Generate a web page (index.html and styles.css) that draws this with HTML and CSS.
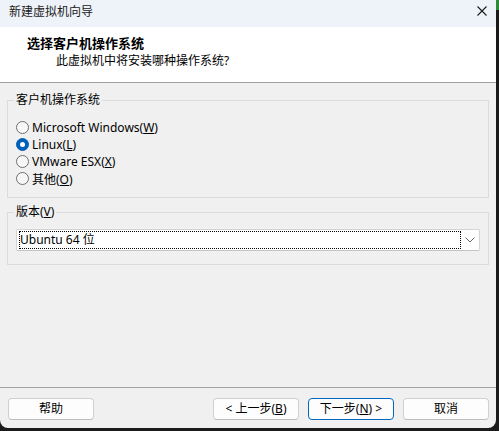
FILE: index.html
```html
<!DOCTYPE html>
<html lang="zh-CN">
<head>
<meta charset="utf-8">
<title>新建虚拟机向导</title>
<link rel="stylesheet" href="styles.css">
</head>
<body>
<div class="window">
  <div class="titlebar">
    <span class="title">新建虚拟机向导</span>
    <svg class="close" width="10" height="10" viewBox="0 0 10 10"><path d="M0.5 0.5 L9.5 9.5 M9.5 0.5 L0.5 9.5" stroke="#1a1a1a" stroke-width="1.1" fill="none"/></svg>
  </div>
  <div class="header">
    <div class="h-title">选择客户机操作系统</div>
    <div class="h-sub">此虚拟机中将安装哪种操作系统?</div>
  </div>
  <div class="content">
    <fieldset class="group group-os">
      <legend>客户机操作系统</legend>
      <div class="radio-list">
        <div class="radio"><span class="dot"></span><span>Microsoft Windows(<u>W</u>)</span></div>
        <div class="radio"><span class="dot checked"></span><span>Linux(<u>L</u>)</span></div>
        <div class="radio"><span class="dot"></span><span>VMware ESX(<u>X</u>)</span></div>
        <div class="radio"><span class="dot"></span><span>其他(<u>O</u>)</span></div>
      </div>
    </fieldset>
    <fieldset class="group group-ver">
      <legend>版本(<u>V</u>)</legend>
      <div class="combo">
        <div class="combo-field">Ubuntu 64 位</div>
        <div class="combo-arrow"><svg width="10" height="6" viewBox="0 0 10 6"><path d="M0.5 0.5 L5 5 L9.5 0.5" stroke="#6a6a6a" stroke-width="1" fill="none"/></svg></div>
      </div>
    </fieldset>
  </div>
  <div class="footer">
    <button class="btn">帮助</button>
    <span class="spacer"></span>
    <button class="btn">&lt; 上一步(<u>B</u>)</button>
    <button class="btn primary">下一步(<u>N</u>) &gt;</button>
    <button class="btn">取消</button>
  </div>
</div>
</body>
</html>
```

FILE: styles.css
```css
html, body {
  margin: 0;
  padding: 0;
}
body {
  width: 499px;
  height: 431px;
  background: linear-gradient(#2f8a3a, #2f8a3a) no-repeat right top / 3px 10px, #1a1a1a;
  font-family: "Noto Sans", "Noto Sans CJK SC", sans-serif;
  font-size: 12px;
  color: #000;
  overflow: hidden;
}
.window {
  width: 496px;
  height: 428px;
  background: #f0f0f0;
  border-radius: 0 0 8px 8px;
  overflow: hidden;
  display: flex;
  flex-direction: column;
}
.titlebar {
  height: 27px;
  box-sizing: border-box;
  background: #eef2f9;
  display: flex;
  align-items: flex-start;
  padding: 4px 9px 0 9px;
}
.title {
  flex: 1;
  line-height: 16px;
  color: #1a1a1a;
}
.close {
  margin-top: 2px;
}
.header {
  height: 56px;
  box-sizing: border-box;
  background: #fff;
  border-bottom: 1px solid #a0a0a0;
  padding-top: 8px;
}
.h-title {
  font-size: 13px;
  font-weight: bold;
  line-height: 16px;
  padding-left: 27px;
}
.h-sub {
  line-height: 16px;
  margin-top: 2px;
  padding-left: 56px;
}
.content {
  flex: 1;
  padding: 9px 7px 0 7px;
}
.group {
  margin: 0;
  border: 1px solid #dcdcdc;
  padding: 0 8px;
  min-width: 0;
}
.group legend {
  padding: 0 2px;
  margin-left: -2px;
  line-height: 16px;
}
.group-os {
  padding-top: 11px;
  padding-bottom: 10px;
}
.group-ver {
  margin-top: 6px;
  padding-top: 9px;
  padding-bottom: 13px;
}
.radio {
  height: 17px;
  display: flex;
  align-items: center;
  gap: 3px;
}
.dot {
  width: 13px;
  height: 13px;
  box-sizing: border-box;
  border-radius: 50%;
  border: 1px solid #6f6f6f;
  background: #f7f7f7;
  display: flex;
  align-items: center;
  justify-content: center;
}
.dot.checked {
  background: #005fb8;
  border-color: #005fb8;
}
.dot.checked::after {
  content: "";
  width: 5px;
  height: 5px;
  border-radius: 50%;
  background: #fff;
}
.combo {
  height: 22px;
  box-sizing: border-box;
  border: 1px solid #d4d4d4;
  border-bottom-color: #c4c4c4;
  border-radius: 2px;
  background: #fff;
  display: flex;
}
.combo-field {
  flex: 1;
  margin: 1px 0 1px 2px;
  border: 1px dotted #000;
  line-height: 16px;
  padding-left: 0;
}
.combo-arrow {
  width: 18px;
  display: flex;
  align-items: center;
  justify-content: center;
}
.footer {
  border-top: 1px solid #a0a0a0;
  padding: 10px 7px 8px 8px;
  display: flex;
  gap: 9px;
}
.spacer {
  flex: 1;
}
.btn {
  width: 86px;
  height: 22px;
  box-sizing: border-box;
  border: 1px solid #d0d0d0;
  border-bottom-color: #bdbdbd;
  border-radius: 4px;
  background: #fdfdfd;
  font-family: inherit;
  font-size: 12px;
  color: #000;
  padding: 0;
  line-height: 18px;
}
.btn.primary {
  border-color: #0067c0;
}
```
